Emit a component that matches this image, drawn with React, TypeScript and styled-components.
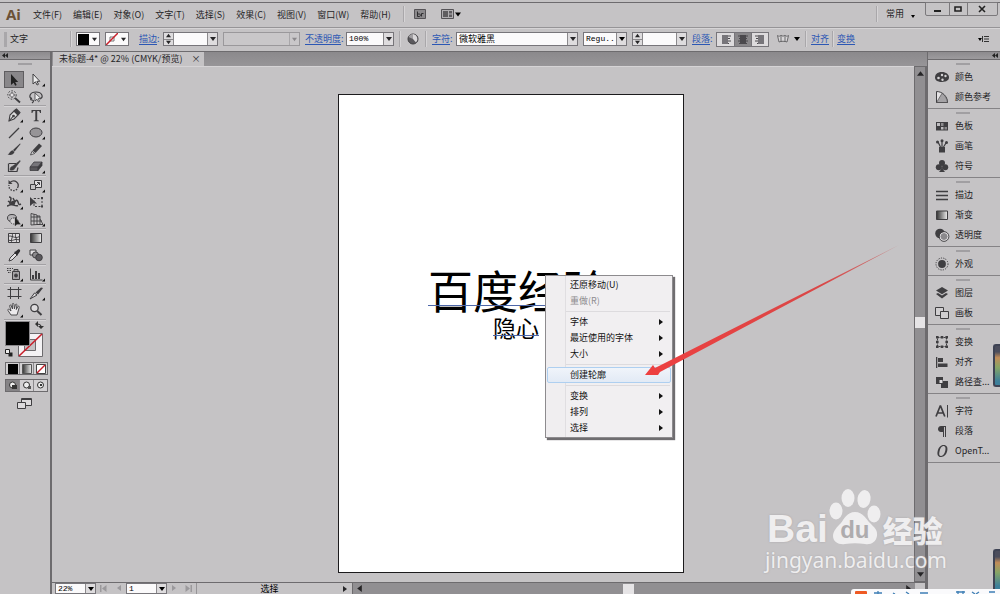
import React from "react";
import styled, { createGlobalStyle, css } from "styled-components";

const color = {
  panel: "#c5c3c5",
  dark: "#918f92",
  edge: "#6d6b6e",
  line: "#969497",
  light: "#d6d4d6",
  text: "#262527",
  icon: "#3f3e41",
  link: "#2c57b4",
  field: "#fbfafb",
};

const GlobalStyle = createGlobalStyle`
  *, *::before, *::after { box-sizing: border-box; }
  body {
    margin: 0;
    background: ${color.panel};
    color: ${color.text};
    font: 9px/12px "Noto Sans CJK SC", sans-serif;
    overflow: hidden;
  }
  button, input, select { font: inherit; color: inherit; margin: 0; padding: 0; }
  svg { display: block; flex: none; }
`;

const Shell = styled.div`
  position: relative;
  display: flex;
  flex-direction: column;
  height: 100vh;
  overflow: hidden;
`;

/* ---------- menu bar ---------- */

const MenuBar = styled.header`
  display: flex;
  align-items: center;
  flex: none;
  height: 28px;
  padding: 0 0 2px 6px;
  border-top: 2px solid ${color.panel};
  border-bottom: 1px solid ${color.line};
  box-shadow: inset 0 1px 0 ${color.edge};
`;

const Logo = styled.h1`
  width: 21px;
  margin: 0;
  color: #6b5137;
  font: bold 15px/18px "Open Sans", sans-serif;
`;

const MenuList = styled.nav`
  display: flex;
  gap: 11px;
  padding: 2px 12px 0 6px;
`;

const PlainButton = styled.button`
  display: flex;
  align-items: center;
  justify-content: center;
  border: 0;
  background: none;
  white-space: nowrap;
`;

const Divider = styled.span<{ $gap?: number }>`
  flex: none;
  width: 2px;
  height: 16px;
  margin: 0 ${(p) => p.$gap ?? 4}px;
  border-left: 1px solid #a9a7aa;
  border-right: 1px solid ${color.light};
`;

const Spacer = styled.span`
  flex: 1;
`;

const WindowControls = styled.div`
  display: flex;
  align-self: flex-start;
  width: 73px;
  height: 14px;
  margin: 0 2px 0 9px;
  border: 1px solid #7b797c;
  border-radius: 0 0 2px 2px;
`;

const WindowButton = styled(PlainButton)<{ $grow: number }>`
  flex: ${(p) => p.$grow};
  & + & { border-left: 1px solid #7b797c; }
`;

/* ---------- options bar ---------- */

const OptionsBar = styled.section`
  display: flex;
  align-items: center;
  flex: none;
  height: 24px;
  padding: 0 10px 2px 4px;
  border-top: 1px solid ${color.light};
  border-bottom: 1px solid ${color.edge};
`;

const Grip = styled.span`
  flex: none;
  width: 3px;
  height: 15px;
  margin-right: 3px;
  background: #a9a7aa;
`;

const ModeLabel = styled.span`
  width: 56px;
`;

const OptionLink = styled.a`
  flex: none;
  color: ${color.link};
  text-decoration: underline;
  text-underline-offset: 2px;
  white-space: nowrap;
`;

const LabelSlot = styled.span<{ $width?: number; $gap?: number }>`
  flex: none;
  width: ${(p) => p.$width ?? 24}px;
  margin-left: ${(p) => p.$gap ?? 5}px;
  color: ${color.link};
  white-space: nowrap;
`;

const fieldFrame = css`
  border: 1px solid #77757a;
  background: ${color.field};
`;

const Field = styled.span<{ $width: number; $gap?: number; $short?: boolean; $muted?: boolean }>`
  ${fieldFrame}
  position: relative;
  display: flex;
  flex: none;
  width: ${(p) => p.$width}px;
  height: ${(p) => (p.$short ? 11 : 14)}px;
  margin-right: ${(p) => p.$gap ?? 5}px;
  ${(p) => p.$muted && "background: #c9c7c9; border-color: #9a989b;"}
`;

const fieldText = css`
  flex: 1;
  width: 0;
  min-width: 0;
  border: 0;
  outline: 0;
  padding: 0 2px;
  background: none;
  font: 8px/10px "Liberation Mono", "Noto Sans CJK SC", monospace;
  color: #000;
`;

const TextInput = styled.input`
  ${fieldText}
`;

const NameInput = styled.input`
  ${fieldText}
  font: 9px/12px "Noto Sans CJK SC", sans-serif;
`;

const Picker = styled.select`
  ${fieldText}
  appearance: none;
  padding-right: 10px;
`;

const DropButton = styled.button`
  display: flex;
  align-items: center;
  justify-content: center;
  flex: none;
  width: 10px;
  border: 0;
  border-left: 1px solid #8b898c;
  background: #dedcde;
`;

const PickerMark = styled.span<{ $muted?: boolean }>`
  position: absolute;
  inset: 0 0 0 auto;
  display: flex;
  align-items: center;
  justify-content: center;
  width: 10px;
  border-left: 1px solid ${(p) => (p.$muted ? "#a9a7aa" : "#8b898c")};
  background: ${(p) => (p.$muted ? "#c9c7c9" : "#dedcde")};
  color: ${(p) => (p.$muted ? "#8b898c" : "#000")};
  pointer-events: none;
`;

const Spinner = styled.span`
  display: flex;
  flex-direction: column;
  flex: none;
  width: 10px;
  border-right: 1px solid #8b898c;
  background: #dedcde;
`;

const SpinButton = styled.button`
  display: flex;
  flex: 1;
  align-items: center;
  justify-content: center;
  border: 0;
  background: none;
  & + & { border-top: 1px solid #8b898c; }
`;

const SwatchButton = styled.button`
  ${fieldFrame}
  display: flex;
  flex: none;
  align-items: center;
  justify-content: space-between;
  width: 24px;
  height: 14px;
  margin-right: 5px;
  padding-right: 2px;
`;

const Segments = styled.div`
  display: flex;
  flex: none;
  height: 15px;
  border: 1px solid #77757a;
`;

const Segment = styled.button<{ $on?: boolean }>`
  display: flex;
  align-items: center;
  justify-content: center;
  width: 17px;
  border: 0;
  background: ${(p) => (p.$on ? "#89878a" : "#dddbdd")};
  & + & { border-left: 1px solid #77757a; }
`;

/* ---------- body ---------- */

const Body = styled.div`
  display: flex;
  flex: 1;
  min-height: 0;
`;

const ToolDock = styled.aside`
  flex: none;
  width: 52px;
  border-right: 2px solid ${color.edge};
`;

const DockHeader = styled.div<{ $end?: boolean }>`
  display: flex;
  align-items: center;
  justify-content: ${(p) => (p.$end ? "flex-end" : "flex-start")};
  height: 8px;
  padding: 0 2px;
  background: linear-gradient(#8d8b8e, #9d9b9e);
  border-bottom: 1px solid ${color.edge};
`;

const DockGrip = styled.span`
  display: block;
  width: 14px;
  height: 2px;
  margin: 3px auto 6px 18px;
  background: #a19fa2;
`;

const ToolGroup = styled.div`
  display: grid;
  grid-template-columns: 20px 20px;
  column-gap: 2px;
  margin: 0 4px 1px;
  border-bottom: 1px solid #a3a1a4;
  box-shadow: 0 1px 0 ${color.light};
`;

const ToolButton = styled.button<{ $active?: boolean }>`
  height: 17px;
  border: 0;
  background: ${(p) => (p.$active ? "#89878a" : "none")};
  box-shadow: ${(p) => (p.$active ? "inset 0 0 0 1px #5f5d60" : "none")};
`;

const PaintArea = styled.div`
  padding: 0 4px;
`;

const MiniRow = styled.div`
  display: flex;
  width: 43px;
  height: 13px;
  margin: 4px 4px 0 5px;
  border: 1px solid #6d6b6e;
`;

const MiniButton = styled.button<{ $on?: boolean }>`
  display: flex;
  flex: 1;
  align-items: center;
  justify-content: center;
  border: 0;
  background: ${(p) => (p.$on ? "#858386" : "#d2d0d2")};
  & + & { border-left: 1px solid #8b898c; }
`;

const ScreenMode = styled(PlainButton)`
  margin: 5px 0 0 15px;
`;

const Work = styled.main`
  display: flex;
  flex-direction: column;
  flex: 1;
  min-width: 0;
`;

const TabStrip = styled.div`
  display: flex;
  flex: none;
  height: 14px;
  padding-left: 1px;
  background: linear-gradient(#8b898c, #979598);
`;

const Tab = styled.div`
  display: flex;
  align-items: center;
  gap: 9px;
  padding: 0 4px 0 6px;
  background: ${color.panel};
  white-space: nowrap;
`;

const Stage = styled.div`
  display: flex;
  flex: 1;
  min-height: 0;
`;

const Canvas = styled.div`
  position: relative;
  flex: 1;
  min-width: 0;
  overflow: hidden;
  border-top: 1px solid ${color.light};
`;

const Artboard = styled.article`
  position: absolute;
  left: 286px;
  top: 27px;
  width: 346px;
  height: 479px;
  border: 1px solid #1c1b1d;
  background: #fff;
`;

const ArtText = styled.p<{ $size: number; $x: number; $y: number }>`
  position: absolute;
  left: ${(p) => p.$x}px;
  top: ${(p) => p.$y}px;
  margin: 0;
  color: #000;
  font-size: ${(p) => p.$size}px;
  line-height: ${(p) => p.$size}px;
  white-space: nowrap;
  &::after {
    content: "";
    position: absolute;
    left: 0;
    right: 0;
    bottom: ${(p) => Math.round(p.$size / 8)}px;
    height: 1px;
    background: #4d67a8;
  }
`;

const ScrollY = styled.div`
  display: flex;
  flex-direction: column;
  align-items: center;
  justify-content: space-between;
  width: 13px;
  padding: 3px 0;
  border: solid ${color.edge};
  border-width: 1px 2px 1px 1px;
  background: ${color.dark};
`;

const Thumb = styled.span<{ $x?: boolean }>`
  width: ${(p) => (p.$x ? 11 : 10)}px;
  height: ${(p) => (p.$x ? 10 : 11)}px;
  margin: ${(p) => (p.$x ? "0 12px 0 0" : "0 0 4px")};
  background: #e6e4e6;
`;

const StatusBar = styled.footer`
  display: flex;
  flex: none;
  align-items: center;
  height: 12px;
  padding-left: 3px;
  border-top: 1px solid ${color.edge};
`;

const PageNav = styled.div<{ $width: number }>`
  display: flex;
  justify-content: space-around;
  flex: none;
  width: ${(p) => p.$width}px;
  color: #9b999c;
`;

const StatusText = styled.span`
  display: flex;
  justify-content: center;
  align-self: stretch;
  width: 146px;
  border-left: 1px solid ${color.line};
  color: #000;
`;

const ScrollX = styled.div`
  display: flex;
  flex: 1;
  align-items: center;
  justify-content: space-between;
  height: 11px;
  margin-left: 4px;
  padding: 0 3px;
  border-left: 1px solid ${color.edge};
  background: ${color.dark};
`;

const ScrollCorner = styled.span`
  width: 12px;
  height: 11px;
  border-right: 2px solid ${color.edge};
`;

/* ---------- context menu ---------- */

const ContextMenu = styled.div`
  position: absolute;
  left: 493px;
  top: 208px;
  width: 128px;
  padding: 1px;
  border: 1px solid #8d8b8e;
  background: linear-gradient(90deg, #f0eef0 19px, #e0dee1 19px 20px, #f1eff1 20px);
  box-shadow: 2px 2px 1px #6f6d70;
`;

const MenuItem = styled.button<{ $hot?: boolean }>`
  display: flex;
  align-items: center;
  justify-content: space-between;
  width: 100%;
  height: 16px;
  padding: 0 6px 0 22px;
  border: 1px solid ${(p) => (p.$hot ? "#aecff0" : "transparent")};
  border-radius: 2px;
  background: ${(p) => (p.$hot ? "linear-gradient(#f0f4fa, #e2eaf5)" : "none")};
  color: ${(p) => (p.disabled ? "#8e8c8f" : "#111")};
  white-space: nowrap;
`;

const MenuRule = styled.hr`
  height: 1px;
  margin: 2px 1px 2px 19px;
  border: 0;
  background: #dddbde;
`;

/* ---------- right dock ---------- */

const PanelDock = styled.aside`
  flex: none;
  width: 73px;
  border-left: 1px solid ${color.edge};
`;

const PanelGroup = styled.section`
  padding: 3px 0 1px;
  border-bottom: 1px solid #858386;
`;

const PanelGrip = styled.span`
  display: block;
  width: 14px;
  height: 2px;
  margin: 0 0 2px 28px;
  background: #a19fa2;
`;

const PanelButton = styled.button`
  display: flex;
  align-items: center;
  gap: 5px;
  width: 100%;
  height: 20px;
  padding-left: 6px;
  border: 0;
  background: none;
  white-space: nowrap;
`;

/* ---------- overlays ---------- */

const ArrowOverlay = styled.svg`
  position: absolute;
  left: 593px;
  top: 178px;
  pointer-events: none;
`;

const Watermark = styled.div`
  position: absolute;
  right: 53px;
  bottom: 20px;
  color: #f3f2f3;
  opacity: 0.92;
  text-shadow: 0 0 2px #a3a1a4;
  pointer-events: none;
`;

const WatermarkTop = styled.div`
  display: flex;
  align-items: flex-end;
  height: 58px;
  padding: 0 0 1px 2px;
  white-space: nowrap;
`;

const Latin = styled.span`
  font: bold 39px/33px "Liberation Sans", sans-serif;
`;

const Paw = styled.span`
  position: relative;
`;

const PawText = styled.span`
  position: absolute;
  inset: auto 0 2px;
  color: #adabad;
  font: bold 24px/26px "Liberation Sans", sans-serif;
  text-align: center;
  text-shadow: none;
`;

const Han = styled.span`
  margin-left: 1px;
  font: 900 30px/31px "Noto Sans CJK SC", sans-serif;
`;

const WatermarkUrl = styled.div`
  font: 21px/28px "Noto Sans", sans-serif;
`;

const EdgeWidget = styled.span<{ $bottom: number }>`
  position: absolute;
  right: 0;
  bottom: ${(p) => p.$bottom}px;
  width: 7px;
  height: 43px;
  border: 2px solid #3e4354;
  border-right-width: 0;
  border-radius: 3px 0 0 3px;
  background: linear-gradient(#4b4d5c 15%, #c28c58 30%, #86a565 55%, #3c7f9a 90%);
`;

const ImeBar = styled.div`
  position: absolute;
  right: 0;
  bottom: 0;
  width: 149px;
  height: 5px;
  border-radius: 3px 0 0 0;
  background: #fafafc;
`;

/* ---------- icons ---------- */

type Dir = "down" | "up" | "left" | "right";
const caretPath: Record<Dir, string> = {
  down: "M0 1h6L3 5z",
  up: "M0 5h6L3 1z",
  left: "M5 0v6L1 3z",
  right: "M1 0v6l4-3z",
};
const Caret = ({ dir = "down", size = 6 }: { dir?: Dir; size?: number }) => (
  <svg width={size} height={size} viewBox="0 0 6 6" fill="currentColor">
    <path d={caretPath[dir]} />
  </svg>
);

const JumpEnd = ({ dir }: { dir: "left" | "right" }) => (
  <svg width="7" height="7" viewBox="0 0 7 7" fill="currentColor">
    <path d={dir === "left" ? "M0 0h1.500v7H0zM6.500 0v7L2 3.500z" : "M5.500 0H7v7H5.500zM.5 0v7L5 3.500z"} />
  </svg>
);

const Chevrons = () => (
  <svg width="6" height="5" viewBox="0 0 6 5" fill="#222">
    <path d="M3 0v5L0 2.500zM6 0v5L3 2.500z" />
  </svg>
);

const k = color.icon;
const toolArt: Record<string, React.ReactNode> = {
  选择工具: <path d="M7 3v11l2.600-2.300 1.600 3 1.500-.8-1.500-2.900h3z" fill="#222" />,
  直接选择: <path d="M7 3v10l2.400-2.200 1.700 3.200 1.400-.7-1.600-3h2.900z" fill="#eee" stroke={k} />,
  魔棒: (
    <g stroke={k} fill="none">
      <circle cx="8" cy="7" r="4.200" strokeDasharray="1.600 1.500" />
      <path d="M8 4l1 2 2 1-2 1-1 2-1-2-2-1 2-1z" fill="#e8e6e8" strokeWidth=".6" />
      <path d="M11 10l5 4.500" strokeWidth="1.800" />
    </g>
  ),
  套索: (
    <g stroke={k} fill="none" strokeWidth="1.200">
      <path d="M6 11c-4-2-2-7 4-7s8 5 4 7" />
      <path d="M6 10c-1.500 0-2 2 0 2s2 1.500 0 3" />
      <path d="M9 5v8l2-1.800 1.500 2.600 1-.6-1.200-2.600 2.500-.3z" fill="#eee" strokeWidth=".8" />
    </g>
  ),
  钢笔: (
    <g stroke={k} fill="#ddd" strokeWidth="1.100">
      <path d="M5 14l1-6 4-4 4 4-4 4-5 2z" />
      <path d="M10.500 3.500l2-1.500 3.500 3.500-1.500 2z" fill={k} />
      <path d="M5 14l4-4.500" />
      <circle cx="9.500" cy="9" r=".8" fill={k} />
    </g>
  ),
  文字: <path d="M5.500 3h9.500v3h-1c-.2-1.500-.7-2-2-2h-.8v8.500c0 .8.400 1 1.600 1v.8H7.700v-.8c1.200 0 1.600-.2 1.600-1V4h-.8c-1.300 0-1.800.5-2 2h-1z" fill={k} />,
  直线段: <path d="M5 14L15 4" stroke={k} strokeWidth="1.200" />,
  椭圆: <ellipse cx="10" cy="8.500" rx="6" ry="4.500" fill="#969497" stroke={k} />,
  画笔: (
    <g fill={k}>
      <path d="M9 9l7-6.500.6.500-6 7.500z" />
      <path d="M8.500 9.300l2 1.700c-1 3-4 3.500-7 2.600 2-.6 2-3.300 5-4.300z" />
    </g>
  ),
  铅笔: (
    <g fill={k}>
      <path d="M13 2.500l3 2.500-6.500 7-3-2.500z" />
      <path d="M6 10.300l2.700 2.200L4.500 14z" fill="#ddd" stroke={k} strokeWidth=".8" />
    </g>
  ),
  斑点画笔: (
    <g stroke={k} fill="none">
      <path d="M5 5.500h7M4.500 5.500v8h8.500l1-4" strokeWidth="1.200" />
      <path d="M9 8l7-5.500.4.500-5.400 7z" fill={k} strokeWidth=".5" />
      <path d="M6 12c0-3 2-4 3.500-4l1.500 1.600c0 2-2 3-5 2.400z" fill={k} strokeWidth=".5" />
    </g>
  ),
  橡皮擦: (
    <g stroke={k} strokeWidth=".8">
      <path d="M8 4h8l-4 5H4z" fill="#77757a" />
      <path d="M4 9h8v3.500H4z" fill="#59575b" />
      <path d="M16 4v3.500l-4 5V9z" fill="#3b3a3d" />
    </g>
  ),
  旋转: (
    <g fill="none" stroke={k} strokeWidth="1.300">
      <path d="M6 5.500c5-4 10 1 7.500 5.500" />
      <path d="M13 12c-3 3.500-9 1-8-4" strokeDasharray="1.500 1.300" />
      <path d="M4.500 3v4h4z" fill={k} stroke="none" />
    </g>
  ),
  比例缩放: (
    <g fill="none" stroke={k}>
      <path d="M8.500 3.500h7v7h-7z" fill="#e0dee0" />
      <path d="M4.500 7.500h5v5h-5z" fill="#c5c3c5" />
      <path d="M10 9l3-3M11 5.500h2.500V8" />
    </g>
  ),
  宽度: (
    <g fill="none" stroke={k} strokeWidth="1.500">
      <path d="M5 3c3 0 2 3 1 5s2 4 4 1 3-4 4-1 1 3 3 2" />
      <path d="M3 12c2 0 3-2 5-1.500s4 2 6 1M9 4l2 4M4 7l4 3" />
      <circle cx="9" cy="9" r="1.500" fill={k} />
    </g>
  ),
  自由变换: (
    <g>
      <path d="M8 4.500h8v8H8z" fill="none" stroke={k} strokeDasharray="2 1.500" />
      <path d="M4 3v9l3-2.500h4z" fill={k} />
      <path d="M15 3h2v2h-2zM15 11.500h2v2h-2z" fill={k} />
    </g>
  ),
  形状生成器: (
    <g stroke={k} fill="#b5b3b6">
      <ellipse cx="8" cy="7" rx="4.500" ry="3.500" />
      <ellipse cx="10" cy="10" rx="4" ry="3" fill="#d5d3d5" strokeDasharray="1.500 1" />
      <path d="M11 6v9l2-1.800h3.500z" fill="#222" strokeWidth=".3" />
    </g>
  ),
  透视网格: (
    <g stroke={k} fill="none" strokeWidth=".9">
      <path d="M5 2.500v11.500M5 2.500l6 1.500v9.500l-6 .5M8 3.300v10.500M5 6h9M5 10h11M11 5h3v8.500h-3M14 8l3 5.500h-6" />
    </g>
  ),
  网格: (
    <g stroke={k} fill="none">
      <path d="M4.500 3.500h11v9h-11z" fill="#dddbdd" />
      <path d="M4.500 6.500c3-2 6 3 11 0M4.500 10c4 2 6-2 11 0M8 3.500c2 3-2 6 0 9M12 3.500c-2 3 2 6 0 9" />
    </g>
  ),
  渐变: <path d="M4.500 3.500h11v9h-11z" fill="url(#fade)" stroke={k} />,
  吸管: (
    <g>
      <path d="M5 14l1-3 5-5 2 2-5 5z" fill="#e2e0e2" stroke={k} />
      <path d="M10 5l1.500-.5L14 2.500c1.500-.7 2.700.7 2 2l-2 2.700-.5 1.500z" fill="#2f2e31" />
    </g>
  ),
  混合: (
    <g stroke={k}>
      <path d="M4 3h6v5H4z" fill="#e2e0e2" />
      <circle cx="9.500" cy="8" r="3" fill="#8d8b8e" />
      <circle cx="13" cy="10.500" r="3.300" fill="#5b595d" />
    </g>
  ),
  符号喷枪: (
    <g stroke={k} fill="#a5a3a6">
      <path d="M8.500 5.500h7v8h-7zM10 3.500h4v2h-4z" />
      <circle cx="12" cy="9.500" r="1.500" fill={k} />
      <path d="M3 2.500h6M3 4.500h4M4 6.500h3" strokeDasharray="1.500 1" />
    </g>
  ),
  图表: (
    <g>
      <path d="M4.500 2.500v11.500h12" fill="none" stroke={k} />
      <path d="M6 9h2v4H6zM9 5h2v8H9zM12 7h2v6h-2z" fill={k} />
    </g>
  ),
  画板: <path d="M6.500 2v12M14.500 2v12M3.500 4.500h14M3.500 11.500h14" stroke={k} fill="none" />,
  切片: (
    <g>
      <path d="M4 14l4.500-6 2.500 2z" fill="#e2e0e2" stroke={k} />
      <path d="M9.500 7.500L15 2.500l2 .5-5 6.500z" fill={k} />
    </g>
  ),
  抓手: (
    <path
      d="M7 13L4 8.500c-.6-1.200.6-1.700 1.400-.9L7 9 5.700 4c-.2-1.200 1.200-1.400 1.500-.3L8.500 7 8.300 2.300c0-1.200 1.500-1.200 1.600 0l.5 4.500 1-4c.3-1.100 1.700-.8 1.500.4L12.300 7.500l1.500-2.800c.6-1 1.900-.4 1.400.8L13 13z"
      fill="#eceaec"
      stroke={k}
      strokeWidth=".9"
    />
  ),
  缩放: (
    <g stroke={k}>
      <circle cx="8.500" cy="6" r="3.700" fill="#dddbdd" strokeWidth="1.300" />
      <path d="M11.300 9l4.200 4" strokeWidth="2" />
    </g>
  ),
};

const flyouts = new Set([
  "直接选择", "钢笔", "文字", "直线段", "椭圆", "铅笔", "橡皮擦", "旋转", "比例缩放",
  "宽度", "形状生成器", "透视网格", "吸管", "符号喷枪", "图表", "切片", "抓手",
]);

const toolGroups = [
  ["选择工具", "直接选择", "魔棒", "套索"],
  ["钢笔", "文字", "直线段", "椭圆", "画笔", "铅笔", "斑点画笔", "橡皮擦"],
  ["旋转", "比例缩放", "宽度", "自由变换", "形状生成器", "透视网格"],
  ["网格", "渐变", "吸管", "混合"],
  ["符号喷枪", "图表"],
  ["画板", "切片", "抓手", "缩放"],
];

const ToolIcon = ({ name }: { name: string }) => (
  <svg width="20" height="17" viewBox="0 0 20 17">
    <defs>
      <linearGradient id="fade">
        <stop offset="0" stopColor="#333" />
        <stop offset="1" stopColor="#eee" />
      </linearGradient>
    </defs>
    {toolArt[name]}
    {flyouts.has(name) && <path d="M19 12.500v3h-3z" fill="#111" />}
  </svg>
);

const panelArt: Record<string, React.ReactNode> = {
  颜色: (
    <g>
      <path d="M8 3C3 3 1 5.500 1 8.500 1 11.500 4 13 8 13c4.500 0 7-2 7-4.700C15 5.500 12 3 8 3z" fill={k} />
      <g fill="#d5d3d5">
        <circle cx="4.500" cy="9" r="1.300" /><circle cx="8" cy="6" r="1.200" />
        <circle cx="11.500" cy="7" r="1.200" /><circle cx="8.500" cy="10.700" r="1.200" />
      </g>
    </g>
  ),
  颜色参考: (
    <g stroke={k}>
      <path d="M2.500 2.500v11h11c0-6-5-11-11-11z" fill="#e4e2e4" />
      <path d="M2.500 13.500L8 4.300c3 1.700 5 5.200 5.500 9.200z" fill="#a5a3a6" strokeWidth=".6" />
    </g>
  ),
  色板: (
    <g>
      <path d="M2 4h12v8.500H2z" fill={k} />
      <path d="M3 5h3v3H3zM7 9h2.500v2.500H7z" fill="#bdbbbe" />
      <path d="M7 5h2.500v3H7zM10.500 9H13v2.500h-2.500z" fill="#8b898c" />
    </g>
  ),
  画笔: (
    <g fill={k}>
      <path d="M5 9h6v5.500H5z" />
      <path d="M6.500 9L4 4M8 9V2.500M9.500 9L12 5" stroke={k} strokeWidth="1.200" />
      <circle cx="3.500" cy="4" r="1.500" /><circle cx="8" cy="2.800" r="1.500" /><circle cx="12.500" cy="4.500" r="1.500" />
    </g>
  ),
  符号: (
    <g fill={k}>
      <circle cx="8" cy="5" r="3" /><circle cx="4.800" cy="9.200" r="3" /><circle cx="11.200" cy="9.200" r="3" />
      <path d="M8 7l1 4.500 2 2.500H5l2-2.500z" />
    </g>
  ),
  描边: <path d="M2 4.500h12M2 8.500h12M2 12.500h12" stroke={k} strokeWidth="1.600" />,
  渐变: <path d="M2.500 4h11v8.500h-11z" fill="url(#fade)" stroke={k} />,
  透明度: (
    <g>
      <circle cx="6" cy="6.500" r="4.800" fill={k} />
      <circle cx="10" cy="9.500" r="4" fill="#8b898c" stroke="#e4e2e4" />
      <circle cx="10" cy="9.500" r="4.900" fill="none" stroke={k} strokeWidth=".9" />
    </g>
  ),
  外观: (
    <g>
      <circle cx="8" cy="8" r="3.900" fill={k} />
      <circle cx="8" cy="8" r="6" fill="none" stroke={k} strokeDasharray="1.200 1.200" />
    </g>
  ),
  图层: (
    <g fill={k}>
      <path d="M8 2l6 3.600-6 3.600-6-3.600z" />
      <path d="M2 9l2-1 4 2.500L12 8l2 1-6 4.500z" />
    </g>
  ),
  画板: (
    <g fill="#d0ced0" stroke={k}>
      <path d="M1.500 2.500h8v8h-8z" />
      <path d="M6.500 6.500h8v7h-8z" />
    </g>
  ),
  变换: (
    <g>
      <path d="M3.500 3.500h9v9h-9z" fill="none" stroke={k} strokeDasharray="2 1" />
      <path d="M2 2h2.600v2.600H2zM6.700 2h2.600v2.600H6.700zM11.400 2H14v2.600h-2.600zM2 6.700h2.600v2.600H2zM11.400 6.700H14v2.600h-2.600zM2 11.400h2.600V14H2zM6.700 11.400h2.600V14H6.700zM11.400 11.400H14V14h-2.600z" fill={k} />
    </g>
  ),
  对齐: <path d="M2 3h1.300v11H2zM4 4h5v4H4zM4 9.500h9.500V13H4z" fill={k} />,
  "路径查...": (
    <g fill={k}>
      <path d="M2 3h7v7H2z" />
      <path d="M7 7h7v7H7z" />
      <path d="M5.500 6h3v3h-3z" fill="#dddbdd" />
    </g>
  ),
  字符: (
    <g stroke={k} fill="none">
      <path d="M2 13.500L6.200 3h.4l4.200 10.500M3.700 10h5.400" strokeWidth="1.700" />
      <path d="M13.500 2v12.500" />
    </g>
  ),
  段落: <path d="M7 3h5v11h-1V4h-1v10H9V9C5 9.500 4 7.500 4 6s1-3 3-3z" fill={k} />,
  "OpenT...": (
    <path
      fillRule="evenodd"
      d="M9.500 2c3.400 0 4.600 2.500 3.700 6.100-.8 3.500-3.200 5.900-6 5.900-3.200 0-4.400-2.500-3.500-6.100C4.500 4.400 6.800 2 9.500 2zm-.2.900C7.400 3 6.300 5.200 5.600 7.900c-.8 3.200-.5 5.200 1.500 5.200s3.400-2.200 4.100-5c.8-3.100.3-5.200-1.900-5.200z"
      fill={k}
    />
  ),
};

const panelGroups = [
  ["颜色", "颜色参考"],
  ["色板", "画笔", "符号"],
  ["描边", "渐变", "透明度"],
  ["外观"],
  ["图层", "画板"],
  ["变换", "对齐", "路径查..."],
  ["字符", "段落", "OpenT..."],
];

const menus = ["文件(F)", "编辑(E)", "对象(O)", "文字(T)", "选择(S)", "效果(C)", "视图(V)", "窗口(W)", "帮助(H)"];

const contextItems: ({ label: string; sub?: boolean; off?: boolean; hot?: boolean } | null)[] = [
  { label: "还原移动(U)" },
  { label: "重做(R)", off: true },
  null,
  { label: "字体", sub: true },
  { label: "最近使用的字体", sub: true },
  { label: "大小", sub: true },
  null,
  { label: "创建轮廓", hot: true },
  null,
  { label: "变换", sub: true },
  { label: "排列", sub: true },
  { label: "选择", sub: true },
];

const StepField = ({ id, label, gap }: { id?: string; label: string; gap?: number }) => (
  <Field $width={55} $gap={gap}>
    <Spinner>
      <SpinButton aria-label={`${label} +`}><Caret dir="up" size={5} /></SpinButton>
      <SpinButton aria-label={`${label} -`}><Caret size={5} /></SpinButton>
    </Spinner>
    <TextInput id={id} aria-label={label} />
    <DropButton aria-label={label}><Caret /></DropButton>
  </Field>
);

const alignPaths = [
  ["M2 1h6v9H2z", "M8 2h3M8 4.500h2M8 7h3M8 9.500h1"],
  ["M3 1h6v9H3z", "M1 2h10M2 4.500h8M1 7h10M2 9.500h8"],
  ["M4 1h6v9H4z", "M1 2h3M2 4.500h2M1 7h3M3 9.500h1"],
];

const Options = () => (
  <OptionsBar>
    <Grip />
    <ModeLabel>文字</ModeLabel>
    <Divider />
    <SwatchButton aria-label="填色">
      <svg width="12" height="12" viewBox="0 0 12 12"><path d="M1 1h11v11H1z" /></svg>
      <Caret size={5} />
    </SwatchButton>
    <SwatchButton aria-label="描边颜色">
      <svg width="12" height="12" viewBox="0 0 12 12">
        <path d="M4 4h4v4H4z" fill="none" stroke="#777" />
        <path d="M0 12L12 0" stroke="#c8202c" strokeWidth="1.500" />
      </svg>
      <Caret size={5} />
    </SwatchButton>
    <LabelSlot><OptionLink as="label" htmlFor="stroke">描边</OptionLink>:</LabelSlot>
    <StepField id="stroke" label="描边" />
    <Field $width={77} $muted>
      <Picker aria-label="变量宽度" disabled><option /></Picker>
      <PickerMark $muted><Caret size={5} /></PickerMark>
    </Field>
    <LabelSlot $width={41} $gap={0}><OptionLink as="label" htmlFor="opacity">不透明度</OptionLink>:</LabelSlot>
    <Field $width={48}>
      <TextInput id="opacity" defaultValue="100%" />
      <DropButton aria-label="不透明度"><Caret /></DropButton>
    </Field>
    <Divider $gap={0} />
    <PlainButton aria-label="重新着色">
      <svg width="24" height="12" viewBox="0 0 24 12">
        <circle cx="12" cy="6" r="5" fill="#5b595d" stroke="#3f3e41" />
        <path d="M12 1a5 5 0 0 1 3 8.500L12 6z" fill="#d8d6d8" />
        <path d="M12 6L7.500 4A5 5 0 0 1 12 1z" fill="#a19fa2" />
      </svg>
    </PlainButton>
    <Divider $gap={0} />
    <LabelSlot><OptionLink as="label" htmlFor="family">字符</OptionLink>:</LabelSlot>
    <Field $width={122}>
      <NameInput id="family" defaultValue="微软雅黑" />
      <DropButton aria-label="字体"><Caret /></DropButton>
    </Field>
    <Field $width={44}>
      <Picker aria-label="字体样式"><option>Regu..</option></Picker>
      <PickerMark><Caret /></PickerMark>
    </Field>
    <StepField label="字号" gap={0} />
    <LabelSlot><OptionLink href="#paragraph">段落</OptionLink>:</LabelSlot>
    <Segments>
      {["左对齐", "居中对齐", "右对齐"].map((label, i) => (
        <Segment key={label} aria-label={label} $on={i === 1}>
          <svg width="12" height="11" viewBox="0 0 12 11">
            <path d={alignPaths[i][0]} fill={i === 1 ? "#4b494d" : "#77757a"} />
            <path d={alignPaths[i][1]} stroke="#4b494d" />
          </svg>
        </Segment>
      ))}
    </Segments>
    <PlainButton aria-label="封套">
      <svg width="32" height="12" viewBox="0 0 32 12">
        <path d="M8.500 2.500c1 1 3 1 3.500-.500 1 1.500 3 1.500 4 0 .5 1.500 2.500 1.500 3.500.5l-1.500 6.500c-2-1-6-1-8 0zM12 3v6M16 3v6" fill="#d8d6d8" stroke="#5f5d60" strokeWidth=".9" />
        <path d="M25 4h6l-3 4z" />
      </svg>
    </PlainButton>
    <Divider />
    <OptionLink href="#align">对齐</OptionLink>
    <Divider $gap={3} />
    <OptionLink href="#transform">变换</OptionLink>
    <Spacer />
    <PlainButton aria-label="面板菜单">
      <svg width="12" height="8" viewBox="0 0 12 8">
        <path d="M0 3h4L2 6z" />
        <path d="M4.500 1v6M6 1.500h5M6 4h5M6 6.500h5" stroke="#333" />
      </svg>
    </PlainButton>
  </OptionsBar>
);

const Tools = () => (
  <ToolDock>
    <DockHeader><Chevrons /></DockHeader>
    <DockGrip />
    {toolGroups.map((group) => (
      <ToolGroup key={group[0]}>
        {group.map((name) => (
          <ToolButton key={name} aria-label={name} $active={name === "选择工具"}>
            <ToolIcon name={name} />
          </ToolButton>
        ))}
      </ToolGroup>
    ))}
    <PaintArea>
      <svg width="42" height="37" viewBox="0 1 42 37">
        <path d="M14.500 13.500h24v23h-24z" fill="#f4f2f4" stroke="#6d6b6e" />
        <path d="M20.500 19.500h11v11h-11z" fill="#c5c3c5" stroke="#6d6b6e" />
        <path d="M15 36L38 14" stroke="#c8202c" strokeWidth="1.600" />
        <path d="M1 1h25v25H1z" fill="#8b898c" />
        <path d="M2 2h23v23H2z" />
        <path d="M33 4c3 0 4 1 4 3" fill="none" stroke="#333" strokeWidth="1.200" />
        <path d="M34 1v6l-3-3zM34 6h6l-3 3z" fill="#333" />
        <path d="M4.500 32.500h4v4h-4z" fill="#222" />
        <path d="M1.500 29.500h4v4h-4z" fill="#eee" stroke="#222" />
      </svg>
    </PaintArea>
    <MiniRow>
      <MiniButton aria-label="颜色">
        <svg width="10" height="10" viewBox="0 0 10 10"><path d="M0 0h10v10H0z" /></svg>
      </MiniButton>
      <MiniButton aria-label="渐变">
        <svg width="10" height="10" viewBox="0 0 10 10"><path d="M.5.5h9v9h-9z" fill="url(#fade)" stroke="#555" /></svg>
      </MiniButton>
      <MiniButton aria-label="无">
        <svg width="10" height="10" viewBox="0 0 10 10">
          <path d="M.5.5h9v9h-9z" fill="#fff" stroke="#444" />
          <path d="M1 9L9 1" stroke="#c8202c" strokeWidth="1.500" />
        </svg>
      </MiniButton>
    </MiniRow>
    <MiniRow>
      {["正常绘图", "背面绘图", "内部绘图"].map((label, i) => (
        <MiniButton key={label} aria-label={label} $on={i === 0}>
          <svg width="10" height="9" viewBox="0 0 10 9">
            <circle cx="4.500" cy="4" r="3" fill="#eee" stroke="#333" />
            {i === 0 && <path d="M4 4h5v4H4z" fill="#333" />}
            {i === 1 && <path d="M6 5h3v3H6z" fill="#555" />}
            {i === 2 && <path d="M4 3h2v2H4z" fill="#333" />}
          </svg>
        </MiniButton>
      ))}
    </MiniRow>
    <ScreenMode aria-label="屏幕模式">
      <svg width="18" height="13" viewBox="0 0 18 13" fill="#dddbdd" stroke={k}>
        <path d="M6.500 1.500h10v7h-10zM6.500 2.500h10" />
        <path d="M2.500 5.500h8v6h-8z" />
      </svg>
    </ScreenMode>
  </ToolDock>
);

const Panels = () => (
  <PanelDock>
    <DockHeader $end><Chevrons /></DockHeader>
    {panelGroups.map((group) => (
      <PanelGroup key={group[0]}>
        <PanelGrip />
        {group.map((name) => (
          <PanelButton key={name}>
            <svg width="16" height="16" viewBox="0 0 16 16">{panelArt[name]}</svg>
            {name}
          </PanelButton>
        ))}
      </PanelGroup>
    ))}
  </PanelDock>
);

export default function App() {
  return (
    <Shell>
      <GlobalStyle />
      <MenuBar>
        <Logo>Ai</Logo>
        <MenuList>
          {menus.map((m) => <PlainButton key={m}>{m}</PlainButton>)}
        </MenuList>
        <Divider $gap={0} />
        <PlainButton aria-label="Bridge">
          <svg width="30" height="12" viewBox="0 0 30 12">
            <path d="M9.500 1.500h11v9h-11z" fill="#8b898c" stroke="#555357" />
            <path d="M12.500 3.500v5h1.500c2 0 2-2.500 0-2.500h-1.500M16.500 8.500V5.500h2" stroke="#2f2e31" fill="none" />
          </svg>
        </PlainButton>
        <PlainButton aria-label="排列文档">
          <svg width="30" height="12" viewBox="0 0 30 12">
            <path d="M6.500 1.500h12v9h-12z" fill="#b1afb2" stroke="#555357" />
            <path d="M8 3h5v6H8zM14 3h3v2.500h-3zM14 6.500h3V9h-3z" fill="#5f5d60" />
            <path d="M20 4.500h6l-3 4z" />
          </svg>
        </PlainButton>
        <Spacer />
        <Divider $gap={8} />
        <PlainButton>
          常用
          <svg width="12" height="8" viewBox="0 0 12 8"><path d="M7 5h4L9 8z" /></svg>
        </PlainButton>
        <WindowControls>
          <WindowButton $grow={25} aria-label="最小化">
            <svg width="9" height="8" viewBox="0 0 9 8"><path d="M1 5h7v2H1z" fill="#222" /></svg>
          </WindowButton>
          <WindowButton $grow={18} aria-label="最大化">
            <svg width="8" height="8" viewBox="0 0 8 8"><path d="M1 2h6v4H1z" fill="none" stroke="#222" strokeWidth="1.600" /></svg>
          </WindowButton>
          <WindowButton $grow={32} aria-label="关闭">
            <svg width="8" height="8" viewBox="0 0 8 8"><path d="M1 1l6 6M7 1L1 7" stroke="#222" strokeWidth="1.600" /></svg>
          </WindowButton>
        </WindowControls>
      </MenuBar>
      <Options />
      <Body>
        <Tools />
        <Work>
          <TabStrip>
            <Tab>
              未标题-4* @ 22% (CMYK/预览)
              <PlainButton aria-label="关闭">×</PlainButton>
            </Tab>
          </TabStrip>
          <Stage>
            <Canvas>
              <Artboard>
                <ArtText $size={45} $x={89} $y={172}>百度经验</ArtText>
                <ArtText $size={23} $x={154} $y={221}>隐心</ArtText>
              </Artboard>
              <ContextMenu>
                {contextItems.map((item, i) =>
                  item ? (
                    <MenuItem key={i} disabled={item.off} $hot={item.hot}>
                      {item.label}
                      {item.sub && <Caret dir="right" />}
                    </MenuItem>
                  ) : (
                    <MenuRule key={i} />
                  )
                )}
              </ContextMenu>
              <ArrowOverlay width="256" height="134" viewBox="0 0 256 134">
                <defs>
                  <linearGradient id="trail" x1="0" x2="1" y1="1" y2="0">
                    <stop offset="0" stopColor="#ee4040" />
                    <stop offset=".7" stopColor="#d94747" />
                    <stop offset="1" stopColor="#c58080" />
                  </linearGradient>
                </defs>
                <path d="M0 130L8 120l2 3L254 0 15 127l-2 3z" fill="url(#trail)" />
              </ArrowOverlay>
            </Canvas>
            <ScrollY><Caret dir="up" size={7} /><Thumb /><Caret size={7} /></ScrollY>
          </Stage>
          <StatusBar>
            <Field $width={41} $gap={0} $short>
              <Picker aria-label="缩放比例"><option>22%</option></Picker>
              <PickerMark><Caret /></PickerMark>
            </Field>
            <PageNav $width={30}><JumpEnd dir="left" /><Caret dir="left" /></PageNav>
            <Field $width={41} $gap={0} $short>
              <Picker aria-label="画板"><option>1</option></Picker>
              <PickerMark><Caret /></PickerMark>
            </Field>
            <PageNav $width={29}><Caret dir="right" /><JumpEnd dir="right" /></PageNav>
            <StatusText>选择</StatusText>
            <Caret dir="right" />
            <ScrollX><Caret dir="left" size={7} /><Thumb $x /><Caret dir="right" size={7} /></ScrollX>
            <ScrollCorner />
          </StatusBar>
        </Work>
        <Panels />
      </Body>
      <Watermark>
        <WatermarkTop>
          <Latin>Bai</Latin>
          <Paw>
            <svg width="54" height="58" viewBox="0 0 54 58" fill="currentColor">
              <ellipse cx="8" cy="24" rx="6.500" ry="8.500" />
              <ellipse cx="20" cy="11" rx="6.500" ry="9" />
              <ellipse cx="36" cy="12" rx="6.500" ry="9" transform="rotate(10 36 12)" />
              <ellipse cx="46" cy="27" rx="6.500" ry="8.500" />
              <path d="M27 25c8 0 11 7 15 11 4 4 8 7 7 13-1 6-6 9-12 8-7-1-13-1-20 0-6 1-12-2-12-8 0-5 4-9 8-13 3-4 6-11 14-11z" />
            </svg>
            <PawText>du</PawText>
          </Paw>
          <Han>经验</Han>
        </WatermarkTop>
        <WatermarkUrl>jingyan.baidu.com</WatermarkUrl>
      </Watermark>
      <EdgeWidget $bottom={207} />
      <EdgeWidget $bottom={2} />
      <ImeBar>
        <svg width="149" height="5" viewBox="0 0 149 5">
          <path d="M4 5V3q0-1 1-1h10q1 0 1 1v2z" fill="#ee5a24" />
          <path d="M23 4h8M27 2v3M42 4l2 1M55 3l3 2M69 4h8M105 3h9M107 2v3M112 2v3M121 3l3 2M128 3l-3 2M138 3h6" stroke="#3f7fb5" strokeWidth="1.300" />
        </svg>
      </ImeBar>
    </Shell>
  );
}
